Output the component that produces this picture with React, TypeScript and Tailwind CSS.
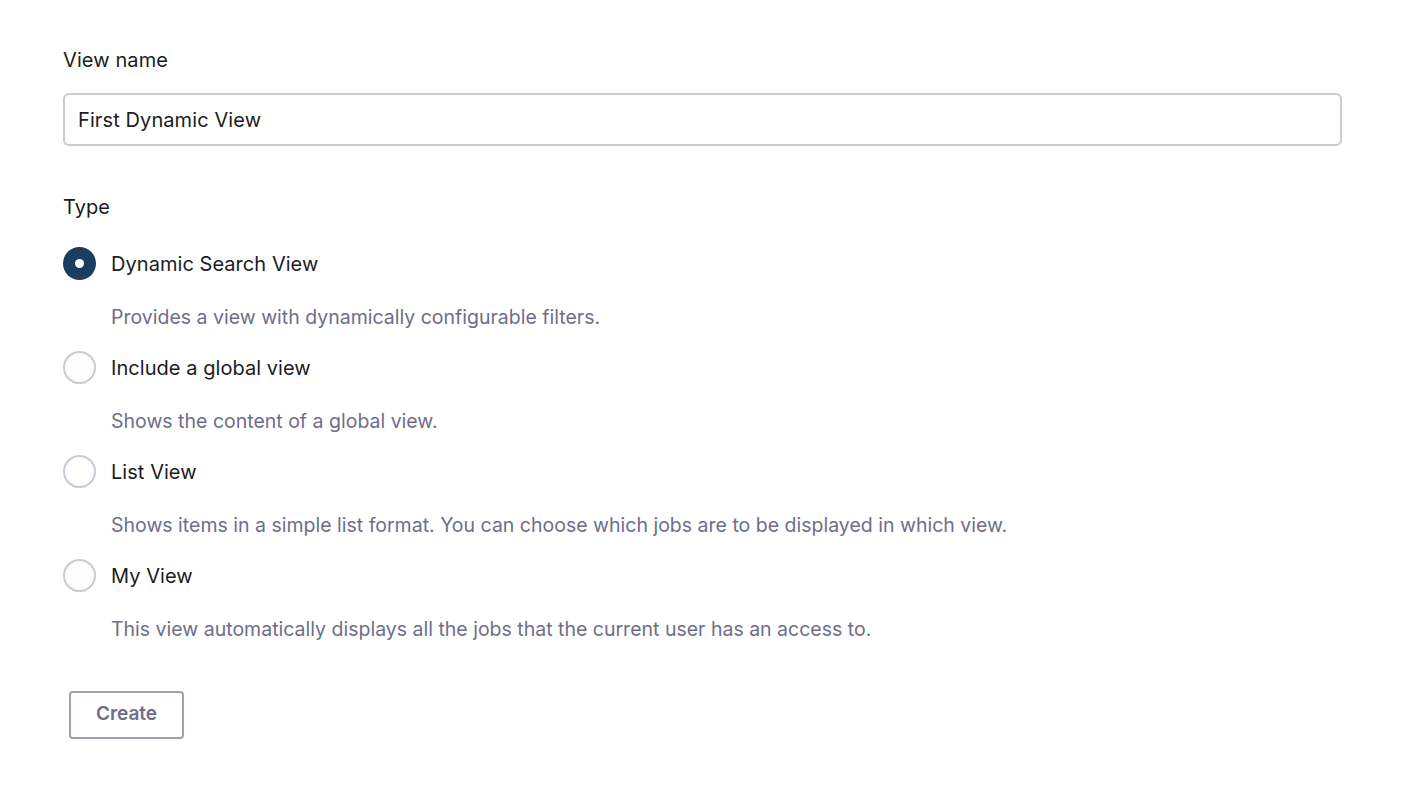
import React, { useState } from "react";

const options = [
  { label: "Dynamic Search View", desc: "Provides a view with dynamically configurable filters." },
  { label: "Include a global view", desc: "Shows the content of a global view." },
  { label: "List View", desc: "Shows items in a simple list format. You can choose which jobs are to be displayed in which view." },
  { label: "My View", desc: "This view automatically displays all the jobs that the current user has an access to." },
];

export default function App() {
  const [sel, setSel] = useState(0);
  return (
    <div className="min-h-screen bg-white pl-[63px] pr-[70px] pt-[46px] text-[20px] text-[#1b1b24]" style={{ fontFamily: "Inter, 'Noto Sans', sans-serif" }}>
      <div className="leading-7 tracking-[0.1px]">View name</div>
      <input
        className="mt-[19px] block h-[53px] w-full rounded-[6px] border-2 border-[#c5ccd3] px-[13px] text-[20px] tracking-[0.1px] text-[#1b1b24] outline-none"
        defaultValue="First Dynamic View"
      />
      <div className="mt-[47px] leading-7">Type</div>
      <div className="mt-[26px] flex flex-col">
        {options.map((o, i) => (
          <div key={o.label} className={i > 0 ? "mt-[20.5px]" : ""}>
            <label className="flex h-[33px] cursor-pointer items-center" onClick={() => setSel(i)}>
              {sel === i ? (
                <span className="flex h-[33px] w-[33px] items-center justify-center rounded-full bg-[#1b3d5f]">
                  <span className="h-[9px] w-[9px] rounded-full bg-white" />
                </span>
              ) : (
                <span className="h-[33px] w-[33px] rounded-full border-2 border-[#c5ccd3]" />
              )}
              <span className="ml-[15px] leading-7 tracking-[0.05px]">{o.label}</span>
            </label>
            <div className="mt-[22.5px] pl-[48px] text-[19.5px] leading-7 text-[#6e6e88]">{o.desc}</div>
          </div>
        ))}
      </div>
      <button className="ml-[6px] mt-[48px] flex h-[48px] w-[115px] items-center justify-center rounded-[4px] border-2 border-[#9aa3ad] text-[19px] font-semibold text-[#6e6e88]">
        Create
      </button>
    </div>
  );
}
